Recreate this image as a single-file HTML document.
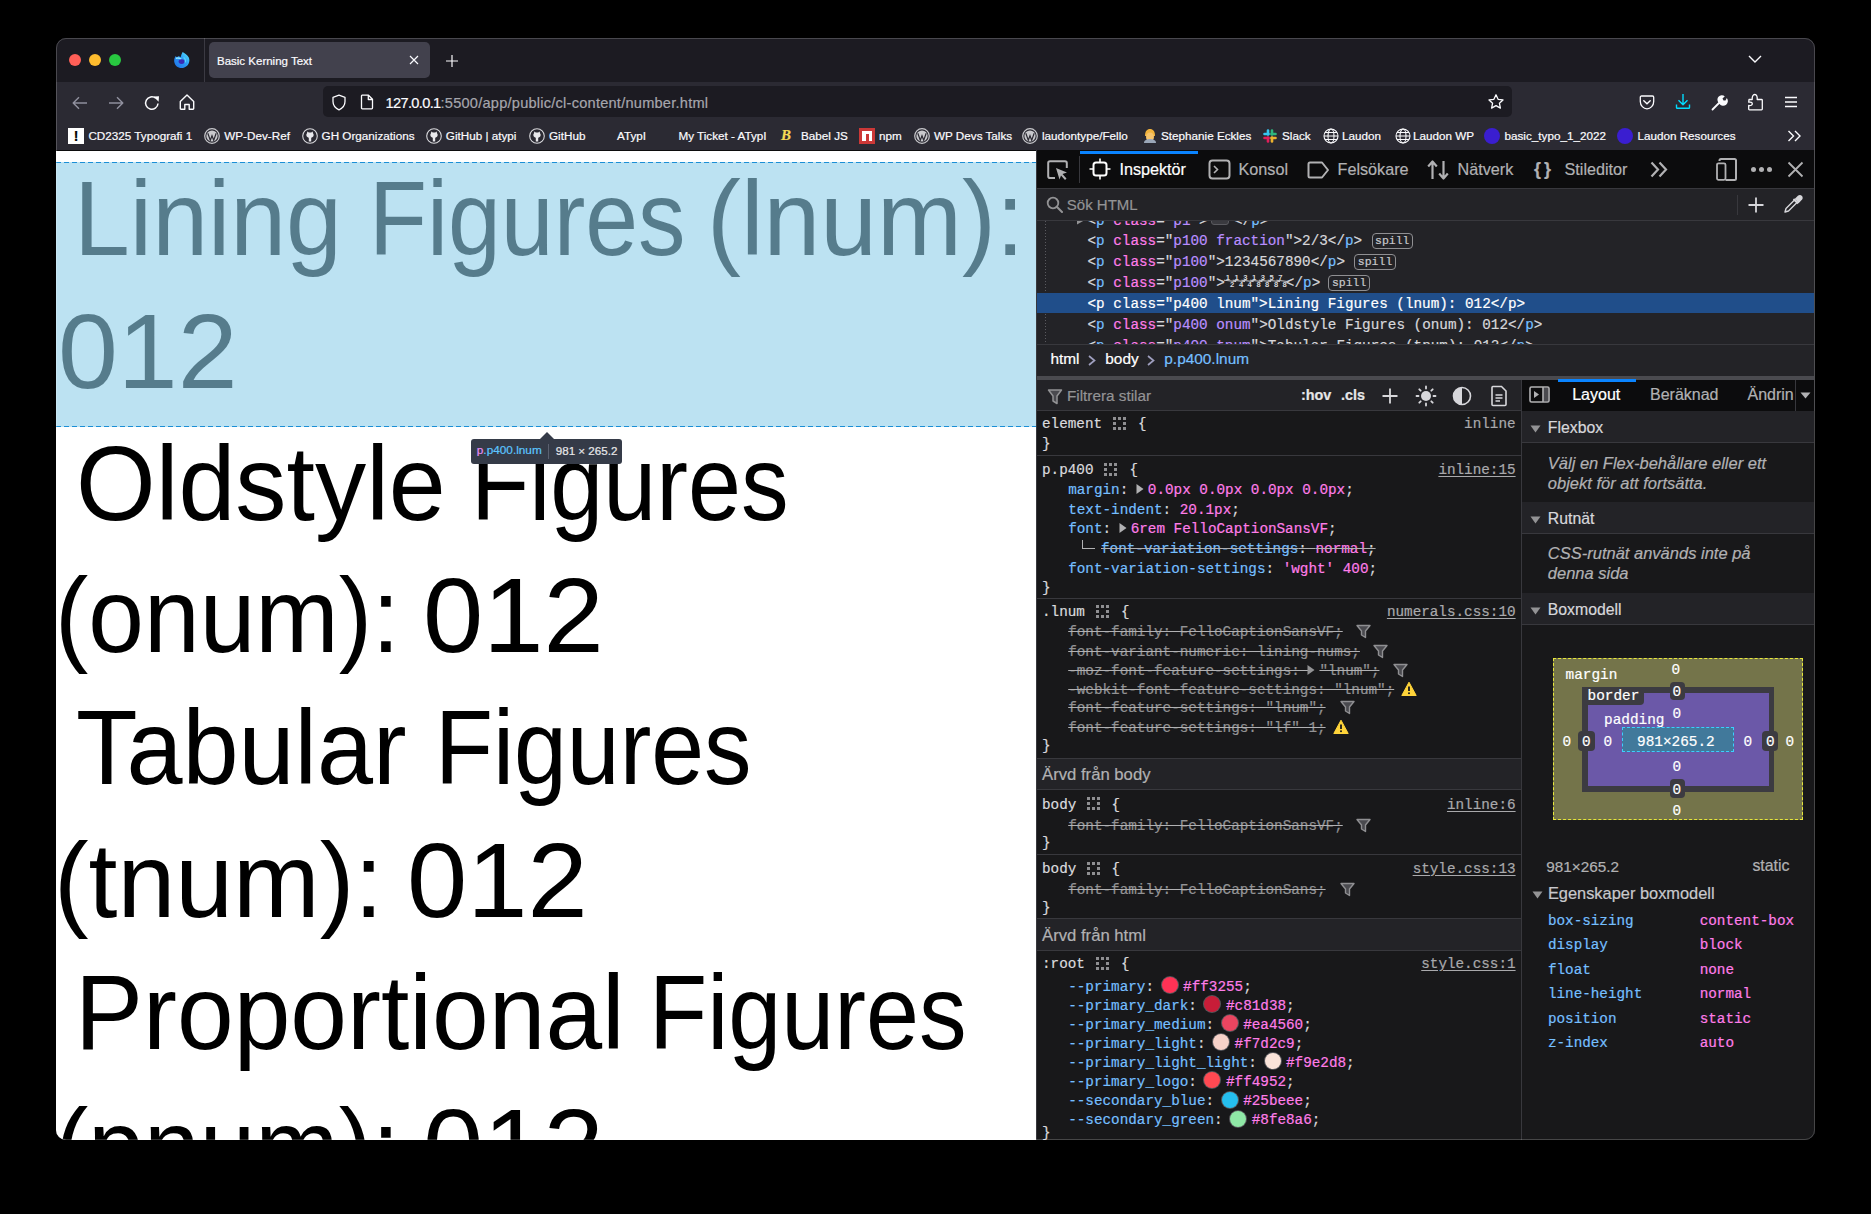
<!DOCTYPE html>
<html><head><meta charset="utf-8">
<style>
*{box-sizing:border-box;margin:0;padding:0}
html,body{width:1871px;height:1214px;background:#000;overflow:hidden;font-family:"Liberation Sans",sans-serif}
.a{position:absolute;white-space:nowrap}
#win{position:absolute;left:56px;top:38px;width:1759px;height:1102px;border-radius:10px;overflow:hidden;background:#1c1b22}
#w{position:absolute;left:-56px;top:-38px;width:1871px;height:1214px}
.big{position:absolute;white-space:nowrap;font-size:105px;line-height:105px;color:#000;transform-origin:0 0}
.bm{top:128px;font-size:11.7px;line-height:16px;color:#fbfbfe}
.mono{font-family:"Liberation Mono",monospace}
#w .a{-webkit-text-stroke:0.2px currentColor}
#w .big{-webkit-text-stroke:0}
</style></head><body>
<div id="win"><div id="w">
  <!-- tab bar -->
  <div class="a" style="left:56px;top:38px;width:1759px;height:44px;background:#1c1b22"></div>
  <!-- toolbar + bookmarks -->
  <div class="a" style="left:56px;top:82px;width:1759px;height:68px;background:#2b2a33"></div>

  <!-- CHROME -->
  <div class="a" style="left:69px;top:54px;width:12px;height:12px;border-radius:50%;background:#ff5f57"></div>
  <div class="a" style="left:89px;top:54px;width:12px;height:12px;border-radius:50%;background:#febc2e"></div>
  <div class="a" style="left:109px;top:54px;width:12px;height:12px;border-radius:50%;background:#28c840"></div>
  <svg class="a" style="left:173px;top:51px" width="18" height="18" viewBox="0 0 18 18">
    <defs><linearGradient id="ffg" x1="0" y1="1" x2="1" y2="0"><stop offset="0" stop-color="#1f6fe6"/><stop offset="0.55" stop-color="#2c9cf5"/><stop offset="1" stop-color="#5ef0ff"/></linearGradient></defs>
    <path d="M9.6 0.9C11.5 2.3 14.5 3.8 15.8 6.5C17.5 10.3 15.4 15.8 10 16.9C5.5 17.7 1.6 14.6 1.2 10.4C1 8.5 1.6 6.4 2.8 5C3.2 5.8 3.6 6.3 4.2 6.6C4.5 5.6 5.2 5.1 6 5.2C6.6 5.4 7 6 7.6 6.2C7.9 4.5 8.6 2.6 9.6 0.9Z" fill="url(#ffg)"/>
    <path d="M3.5 7.2C5 6.8 6.6 7.2 8 8" stroke="#8fe6ff" stroke-width="1.4" fill="none" stroke-linecap="round"/>
    <ellipse cx="8.6" cy="10.6" rx="3" ry="2.4" fill="#3a2bb5"/>
    <path d="M10.6 6.5C12.4 7.5 13 10 12 11.5" stroke="#55d6ff" stroke-width="1.2" fill="none"/>
  </svg>
  <div class="a" style="left:204px;top:38px;width:1px;height:44px;background:#3b3a43"></div>
  <div class="a" style="left:209px;top:42px;width:221px;height:36px;border-radius:5px;background:#42414d"></div>
  <div class="a" style="left:217px;top:53px;font-size:11.5px;line-height:16px;color:#fbfbfe">Basic Kerning Text</div>
  <svg class="a" style="left:408px;top:54px" width="12" height="12" viewBox="0 0 12 12"><path d="M2 2L10 10M10 2L2 10" stroke="#fbfbfe" stroke-width="1.15"/></svg>
  <svg class="a" style="left:444.5px;top:54px" width="14" height="14" viewBox="0 0 14 14"><path d="M7 1V13M1 7H13" stroke="#fbfbfe" stroke-width="1.2"/></svg>
  <svg class="a" style="left:1748px;top:55px" width="14" height="9" viewBox="0 0 14 9"><path d="M1 1L7 7L13 1" stroke="#fbfbfe" stroke-width="1.4" fill="none"/></svg>

  <!-- toolbar -->
  <svg class="a" style="left:71px;top:94px" width="18" height="18" viewBox="0 0 18 18"><path d="M16 9H2.5M8 3.2L2.2 9L8 14.8" stroke="#8f8f9d" stroke-width="1.4" fill="none" stroke-linejoin="round"/></svg>
  <svg class="a" style="left:107px;top:94px" width="18" height="18" viewBox="0 0 18 18"><path d="M2 9H15.5M10 3.2L15.8 9L10 14.8" stroke="#8f8f9d" stroke-width="1.4" fill="none" stroke-linejoin="round"/></svg>
  <svg class="a" style="left:143px;top:94px" width="18" height="18" viewBox="0 0 18 18"><path d="M15 9.5A6.2 6.2 0 1 1 12.8 4.3" stroke="#fbfbfe" stroke-width="1.5" fill="none"/><path d="M10.5 2.5L16 2.2L15.6 7.8Z" fill="#fbfbfe"/></svg>
  <svg class="a" style="left:178px;top:93px" width="18" height="18" viewBox="0 0 18 18"><path d="M2.3 8.5L9 2L15.7 8.5V15.5C15.7 16 15.4 16.2 15 16.2H11.2V11.5H6.8V16.2H3C2.6 16.2 2.3 16 2.3 15.5Z" stroke="#fbfbfe" stroke-width="1.4" fill="none" stroke-linejoin="round"/></svg>
  <div class="a" style="left:323px;top:86px;width:1189px;height:31px;border-radius:5px;background:#1c1b22"></div>
  <svg class="a" style="left:331px;top:94px" width="16" height="17" viewBox="0 0 16 17"><path d="M8 1.2L14 3.3V7.5C14 11.5 11.5 14.2 8 15.8C4.5 14.2 2 11.5 2 7.5V3.3Z" stroke="#fbfbfe" stroke-width="1.3" fill="none" stroke-linejoin="round"/></svg>
  <svg class="a" style="left:360px;top:94px" width="14" height="16" viewBox="0 0 14 16"><path d="M2 1.2H8.5L12.5 5.2V14C12.5 14.5 12.2 14.8 11.7 14.8H2.3C1.8 14.8 1.5 14.5 1.5 14V2C1.5 1.5 1.8 1.2 2.3 1.2ZM8.3 1.5V5.5H12.3" stroke="#fbfbfe" stroke-width="1.3" fill="none" stroke-linejoin="round"/></svg>
  <div class="a" style="left:385.5px;top:94px;font-size:14.6px;line-height:18px;color:#fbfbfe"><span style="letter-spacing:-0.65px">127.0.0.1</span><span style="color:#a6a6ad;letter-spacing:0.23px">:5500/app/public/cl-content/number.html</span></div>
  <svg class="a" style="left:1487px;top:93px" width="18" height="18" viewBox="0 0 18 18"><path d="M9 1.8L11.1 6.3L16 6.9L12.4 10.2L13.4 15.1L9 12.6L4.6 15.1L5.6 10.2L2 6.9L6.9 6.3Z" stroke="#fbfbfe" stroke-width="1.3" fill="none" stroke-linejoin="round"/></svg>
  <svg class="a" style="left:1639px;top:95px" width="16" height="15" viewBox="0 0 16 15"><path d="M2.5 1H13.5C14.2 1 14.7 1.5 14.7 2.2V6.5C14.7 10.5 11.6 13.8 8 13.8C4.4 13.8 1.3 10.5 1.3 6.5V2.2C1.3 1.5 1.8 1 2.5 1Z" stroke="#fbfbfe" stroke-width="1.3" fill="none"/><path d="M4.8 5.8L8 8.8L11.2 5.8" stroke="#fbfbfe" stroke-width="1.4" fill="none" stroke-linecap="round"/></svg>
  <svg class="a" style="left:1675px;top:93px" width="16" height="17" viewBox="0 0 16 17"><path d="M8 1V11.5M3.5 7.2L8 11.7L12.5 7.2M1.5 11.5V14.5C1.5 15 1.8 15.3 2.3 15.3H13.7C14.2 15.3 14.5 15 14.5 14.5V11.5" stroke="#0df" stroke-width="1.4" fill="none" stroke-linejoin="round"/></svg>
  <svg class="a" style="left:1711px;top:94px" width="17" height="17" viewBox="0 0 17 17"><path d="M1.5 15.5L8.5 8.5" stroke="#fbfbfe" stroke-width="1.8" stroke-linecap="round"/><path d="M8 9A4.2 4.2 0 0 1 13.8 2.2L11.5 4.5L12.5 6.5L14.5 6.5L15.8 4A4.2 4.2 0 0 1 8.5 10Z" fill="#fbfbfe"/></svg>
  <svg class="a" style="left:1747px;top:93px" width="17" height="18" viewBox="0 0 17 18"><path d="M2 6.5H5.2C5 4 5.8 1.5 7.8 1.5C9.8 1.5 10.4 4 10.2 6.5H14.5C15 6.5 15.3 6.8 15.3 7.3V16C15.3 16.5 15 16.8 14.5 16.8H2.5C2 16.8 1.7 16.5 1.7 16V12.5C4 12.8 5.3 12 5.3 10.8C5.3 9.6 4 8.8 1.7 9.2Z" stroke="#fbfbfe" stroke-width="1.3" fill="none" stroke-linejoin="round"/></svg>
  <svg class="a" style="left:1784px;top:96px" width="14" height="12" viewBox="0 0 14 12"><path d="M1 1.5H13M1 6H13M1 10.5H13" stroke="#fbfbfe" stroke-width="1.4"/></svg>


  <!-- bookmarks -->
  <div class="a" style="left:68px;top:128px;width:16px;height:16px;background:#fff;color:#000;font:bold 14px/16px 'Liberation Sans';text-align:center">!</div>
  <div class="a bm" style="left:88.4px">CD2325 Typografi 1</div>
  <svg class="a" style="left:204px;top:128px" width="16" height="16" viewBox="0 0 16 16"><circle cx="8" cy="8" r="7.3" fill="none" stroke="#c8c8cc" stroke-width="1.2"/><circle cx="8" cy="8" r="5.6" fill="#c8c8cc"/><path d="M3.8 5.2L6.3 12.3L8 7.8L9.7 12.3L12.2 5.2" stroke="#2b2a33" stroke-width="1.2" fill="none"/></svg>
  <div class="a bm" style="left:224.3px">WP-Dev-Ref</div>
  <svg class="a" style="left:302px;top:128px" width="16" height="16" viewBox="0 0 16 16"><circle cx="8" cy="8" r="7.3" fill="none" stroke="#d8d8dc" stroke-width="1.1"/><circle cx="8" cy="8" r="6" fill="#2b2a33"/><path d="M5 5.2L5.3 3.6L6.8 4.6H9.2L10.7 3.6L11 5.2C11.6 5.8 11.8 6.6 11.6 7.6C11.3 9 10 9.6 9.2 9.8V13.5H6.8V9.8C6 9.6 4.7 9 4.4 7.6C4.2 6.6 4.4 5.8 5 5.2Z" fill="#e8e8ec"/></svg>
  <div class="a bm" style="left:321.6px">GH Organizations</div>
  <svg class="a" style="left:426px;top:128px" width="16" height="16" viewBox="0 0 16 16"><circle cx="8" cy="8" r="7.3" fill="none" stroke="#d8d8dc" stroke-width="1.1"/><circle cx="8" cy="8" r="6" fill="#2b2a33"/><path d="M5 5.2L5.3 3.6L6.8 4.6H9.2L10.7 3.6L11 5.2C11.6 5.8 11.8 6.6 11.6 7.6C11.3 9 10 9.6 9.2 9.8V13.5H6.8V9.8C6 9.6 4.7 9 4.4 7.6C4.2 6.6 4.4 5.8 5 5.2Z" fill="#e8e8ec"/></svg>
  <div class="a bm" style="left:445.8px">GitHub | atypi</div>
  <svg class="a" style="left:529px;top:128px" width="16" height="16" viewBox="0 0 16 16"><circle cx="8" cy="8" r="7.3" fill="none" stroke="#d8d8dc" stroke-width="1.1"/><circle cx="8" cy="8" r="6" fill="#2b2a33"/><path d="M5 5.2L5.3 3.6L6.8 4.6H9.2L10.7 3.6L11 5.2C11.6 5.8 11.8 6.6 11.6 7.6C11.3 9 10 9.6 9.2 9.8V13.5H6.8V9.8C6 9.6 4.7 9 4.4 7.6C4.2 6.6 4.4 5.8 5 5.2Z" fill="#e8e8ec"/></svg>
  <div class="a bm" style="left:549px">GitHub</div>
  <div class="a bm" style="left:617px">ATypI</div>
  <div class="a bm" style="left:678.4px">My Ticket - ATypI</div>
  <div class="a" style="left:781px;top:127px;font:italic bold 15px/16px 'Liberation Serif';color:#f5da55">B</div>
  <div class="a bm" style="left:801px">Babel JS</div>
  <div class="a" style="left:859px;top:128px;width:16px;height:16px;background:#cb3837"><div class="a" style="left:3px;top:3px;width:10px;height:10px;background:#fff"></div><div class="a" style="left:6.5px;top:6px;width:3px;height:7px;background:#cb3837"></div></div>
  <div class="a bm" style="left:879px">npm</div>
  <svg class="a" style="left:914px;top:128px" width="16" height="16" viewBox="0 0 16 16"><circle cx="8" cy="8" r="7.3" fill="none" stroke="#c8c8cc" stroke-width="1.2"/><circle cx="8" cy="8" r="5.6" fill="#c8c8cc"/><path d="M3.8 5.2L6.3 12.3L8 7.8L9.7 12.3L12.2 5.2" stroke="#2b2a33" stroke-width="1.2" fill="none"/></svg>
  <div class="a bm" style="left:934px">WP Devs Talks</div>
  <svg class="a" style="left:1022px;top:128px" width="16" height="16" viewBox="0 0 16 16"><circle cx="8" cy="8" r="7.3" fill="none" stroke="#c8c8cc" stroke-width="1.2"/><circle cx="8" cy="8" r="5.6" fill="#c8c8cc"/><path d="M3.8 5.2L6.3 12.3L8 7.8L9.7 12.3L12.2 5.2" stroke="#2b2a33" stroke-width="1.2" fill="none"/></svg>
  <div class="a bm" style="left:1042px">laudontype/Fello</div>
  <svg class="a" style="left:1142px;top:127px" width="16" height="17" viewBox="0 0 16 17"><path d="M3 9C3 4 5 2 8 2C11 2 13 4 13 9Z" fill="#f2b33d"/><ellipse cx="8" cy="10" rx="4" ry="4.5" fill="#f7c46c"/><path d="M2 16C2 13 5 12 8 12C11 12 14 13 14 16Z" fill="#9aa6b8"/></svg>
  <div class="a bm" style="left:1161px">Stephanie Eckles</div>
  <svg class="a" style="left:1262px;top:128px" width="16" height="16" viewBox="0 0 16 16"><g stroke-width="2.6" stroke-linecap="round"><path d="M6 2.5V6.5" stroke="#36c5f0"/><path d="M2.5 6H6.5" stroke="#36c5f0"/><path d="M13.5 6H9.5" stroke="#2eb67d"/><path d="M10 2.5V6.5" stroke="#2eb67d"/><path d="M10 13.5V9.5" stroke="#ecb22e"/><path d="M13.5 10H9.5" stroke="#ecb22e"/><path d="M2.5 10H6.5" stroke="#e01e5a"/><path d="M6 13.5V9.5" stroke="#e01e5a"/></g></svg>
  <div class="a bm" style="left:1282px">Slack</div>
  <svg class="a" style="left:1323px;top:128px" width="16" height="16" viewBox="0 0 16 16"><g stroke="#fbfbfe" stroke-width="1.1" fill="none"><circle cx="8" cy="8" r="7"/><ellipse cx="8" cy="8" rx="3" ry="7"/><path d="M1 8H15M2 4.5H14M2 11.5H14"/></g></svg>
  <div class="a bm" style="left:1342px">Laudon</div>
  <svg class="a" style="left:1395px;top:128px" width="16" height="16" viewBox="0 0 16 16"><g stroke="#fbfbfe" stroke-width="1.1" fill="none"><circle cx="8" cy="8" r="7"/><ellipse cx="8" cy="8" rx="3" ry="7"/><path d="M1 8H15M2 4.5H14M2 11.5H14"/></g></svg>
  <div class="a bm" style="left:1413px">Laudon WP</div>
  <div class="a" style="left:1484px;top:128px;width:16px;height:16px;border-radius:50%;background:#3a1ed0"></div>
  <div class="a bm" style="left:1504.5px">basic_typo_1_2022</div>
  <div class="a" style="left:1617px;top:128px;width:16px;height:16px;border-radius:50%;background:#3a1ed0"></div>
  <div class="a bm" style="left:1637.4px">Laudon Resources</div>
  <svg class="a" style="left:1787px;top:130px" width="15" height="12" viewBox="0 0 15 12"><path d="M1.5 1L6.5 6L1.5 11M8 1L13 6L8 11" stroke="#fbfbfe" stroke-width="1.4" fill="none"/></svg>
  <!-- content -->
  <div class="a" style="left:56px;top:150px;width:980px;height:990px;background:#fff;border-top:1px solid #0c0c0d"></div>
  <div class="a" id="page" style="left:56px;top:151px;width:980px;height:989px;overflow:hidden"><div class="a" style="left:-56px;top:-151px;width:1871px;height:1214px">
<div class="big" style="left:73.6px;top:165.7px;transform:scaleX(0.956)">Lining</div>
<div class="big" style="left:368.5px;top:165.7px;transform:scaleX(0.904)">Figures</div>
<div class="big" style="left:706.6px;top:165.7px;transform:scaleX(0.971)">(lnum):</div>
<div class="big" style="left:57.7px;top:298.5px;transform:scaleX(1.025)">012</div>
<div class="big" style="left:76.2px;top:431px;transform:scaleX(0.975)">Oldstyle</div>
<div class="big" style="left:471.1px;top:431px;transform:scaleX(0.907)">Figures</div>
<div class="big" style="left:54.5px;top:563px;transform:scaleX(0.953)">(onum):</div>
<div class="big" style="left:422.8px;top:563px;transform:scaleX(1.031)">012</div>
<div class="big" style="left:76.1px;top:695px;transform:scaleX(0.96)">Tabular</div>
<div class="big" style="left:434.5px;top:695px;transform:scaleX(0.904)">Figures</div>
<div class="big" style="left:54.3px;top:828px;transform:scaleX(0.99)">(tnum):</div>
<div class="big" style="left:407.1px;top:828px;transform:scaleX(1.031)">012</div>
<div class="big" style="left:74.5px;top:960px;transform:scaleX(0.971)">Proportional</div>
<div class="big" style="left:649.2px;top:960px;transform:scaleX(0.907)">Figures</div>
<div class="big" style="left:54.5px;top:1093.5px;transform:scaleX(0.953)">(pnum):</div>
<div class="big" style="left:422.8px;top:1093.5px;transform:scaleX(1.031)">012</div>
  <div class="a" style="left:56px;top:162px;width:980px;height:265px;background:rgba(143,206,233,0.6)"></div>
  <div class="a" style="left:56px;top:162px;width:980px;height:1px;background:repeating-linear-gradient(90deg,#1b8fd6 0 5px,transparent 5px 8px)"></div>
  <div class="a" style="left:56px;top:426px;width:980px;height:1px;background:repeating-linear-gradient(90deg,#1b8fd6 0 5px,transparent 5px 8px)"></div>
  </div></div>
  <!-- devtools -->
  <!--DEV-->
<div class="a" style="left:1036px;top:150px;width:779px;height:990px;background:#232327;"></div>
<div class="a" style="left:1036px;top:150px;width:1px;height:990px;background:#38383d;"></div>
<div class="a" style="left:1037px;top:150px;width:777px;height:38px;background:#0c0c0d;"></div>
<div class="a" style="left:1037px;top:188px;width:777px;height:1px;background:#38383d;"></div>
<div class="a" style="left:1080px;top:151px;width:118px;height:3px;background:#0a84ff;"></div>
<svg class="a" style="left:1046px;top:159px" width="24" height="22" viewBox="0 0 24 22"><path d="M9 19H4C3 19 2.2 18.2 2.2 17.2V4C2.2 3 3 2.2 4 2.2H19C20 2.2 20.8 3 20.8 4V9" stroke="#b1b1b3" stroke-width="2" fill="none"/><path d="M10 9L21 13.5L16.5 15L20.5 19.5L19 21L15 16.5L13.5 20.5Z" fill="#b1b1b3"/></svg>
<div class="a" style="left:1079px;top:156px;width:1px;height:27px;background:#38383d;"></div>
<svg class="a" style="left:1089px;top:158px" width="22" height="22" viewBox="0 0 22 22"><rect x="4.5" y="4.5" width="13" height="13" rx="2.5" stroke="#fff" stroke-width="2" fill="none"/><path d="M11 0.5V4.5M11 17.5V21.5M0.5 11H4.5M17.5 11H21.5" stroke="#fff" stroke-width="1.6"/></svg>
<div class="a" style="left:1119.4px;top:157.9px;font-family:'Liberation Sans',sans-serif;font-size:16.2px;line-height:23px;color:#fff;">Inspektör</div>
<svg class="a" style="left:1208px;top:159px" width="23" height="21" viewBox="0 0 23 21"><rect x="1.5" y="1.5" width="20" height="18" rx="3" stroke="#b1b1b3" stroke-width="2" fill="none"/><path d="M6 7L9.5 10.5L6 14" stroke="#b1b1b3" stroke-width="1.6" fill="none"/></svg>
<div class="a" style="left:1238.5px;top:157.9px;font-family:'Liberation Sans',sans-serif;font-size:16.2px;line-height:23px;color:#b1b1b3;">Konsol</div>
<svg class="a" style="left:1307px;top:161px" width="23" height="18" viewBox="0 0 23 18"><path d="M3 1.5H15L21 9L15 16.5H3C2 16.5 1.5 16 1.5 15V3C1.5 2 2 1.5 3 1.5Z" stroke="#b1b1b3" stroke-width="2" fill="none" stroke-linejoin="round"/></svg>
<div class="a" style="left:1337.5px;top:157.9px;font-family:'Liberation Sans',sans-serif;font-size:16.2px;line-height:23px;color:#b1b1b3;">Felsökare</div>
<svg class="a" style="left:1427px;top:160px" width="23" height="20" viewBox="0 0 23 20"><path d="M5.5 19V2M1.2 6.5L5.5 1.5L9.8 6.5M16.5 1V18M12.2 13.5L16.5 18.5L20.8 13.5" stroke="#b1b1b3" stroke-width="2.2" fill="none" stroke-linejoin="round"/></svg>
<div class="a" style="left:1457.5px;top:157.9px;font-family:'Liberation Sans',sans-serif;font-size:16.2px;line-height:23px;color:#b1b1b3;">Nätverk</div>
<div class="a" style="left:1534.0px;top:157.3px;font-family:'Liberation Sans',sans-serif;font-size:18px;line-height:25px;color:#b1b1b3;font-weight:bold;letter-spacing:-1px">{ }</div>
<div class="a" style="left:1564.5px;top:157.9px;font-family:'Liberation Sans',sans-serif;font-size:16.2px;line-height:23px;color:#b1b1b3;">Stileditor</div>
<svg class="a" style="left:1650px;top:161px" width="19" height="17" viewBox="0 0 19 17"><path d="M1.5 1.5L8 8.5L1.5 15.5M9.5 1.5L16 8.5L9.5 15.5" stroke="#b1b1b3" stroke-width="2.2" fill="none"/></svg>
<svg class="a" style="left:1716px;top:158px" width="22" height="23" viewBox="0 0 22 23"><path d="M3.5 3V2.5C3.5 1.7 4.2 1 5 1H18.5C19.3 1 20 1.7 20 2.5V20.5C20 21.3 19.3 22 18.5 22H9.5" stroke="#b1b1b3" stroke-width="2" fill="none"/><rect x="1" y="5.3" width="8.5" height="16.5" rx="1.5" stroke="#b1b1b3" stroke-width="1.8" fill="none"/></svg>
<div class="a" style="left:1751.0px;top:167px;width:5px;height:5px;border-radius:50%;background:#b1b1b3"></div>
<div class="a" style="left:1759.0px;top:167px;width:5px;height:5px;border-radius:50%;background:#b1b1b3"></div>
<div class="a" style="left:1767.0px;top:167px;width:5px;height:5px;border-radius:50%;background:#b1b1b3"></div>
<svg class="a" style="left:1787px;top:161px" width="17" height="17" viewBox="0 0 17 17"><path d="M1.5 1.5L15.5 15.5M15.5 1.5L1.5 15.5" stroke="#b1b1b3" stroke-width="1.8"/></svg>
<div class="a" style="left:1037px;top:189px;width:777px;height:31px;background:#232327;"></div>
<div class="a" style="left:1037px;top:220px;width:777px;height:1px;background:#38383d;"></div>
<svg class="a" style="left:1046px;top:196px" width="18" height="17" viewBox="0 0 18 17"><circle cx="7" cy="7" r="5.3" stroke="#939395" stroke-width="1.8" fill="none"/><path d="M10.8 10.8L16 16" stroke="#939395" stroke-width="2" stroke-linecap="round"/></svg>
<div class="a" style="left:1066.8px;top:194.3px;font-family:'Liberation Sans',sans-serif;font-size:15px;line-height:21px;color:#939395;">Sök HTML</div>
<div class="a" style="left:1737px;top:195px;width:1px;height:20px;background:#38383d;"></div>
<svg class="a" style="left:1747px;top:196px" width="18" height="18" viewBox="0 0 18 18"><path d="M9 1.5V16.5M1.5 9H16.5" stroke="#d7d7db" stroke-width="1.8"/></svg>
<svg class="a" style="left:1783px;top:194px" width="20" height="20" viewBox="0 0 20 20"><path d="M2 18L3 14.5L11.5 6L14 8.5L5.5 17Z" stroke="#d7d7db" stroke-width="1.4" fill="none" stroke-linejoin="round"/><path d="M10.5 5L15 9.5M12.5 5.5L15.5 2.5C16.3 1.7 17.5 1.7 18.2 2.5C19 3.3 19 4.5 18.2 5.2L15 8.5" stroke="#d7d7db" stroke-width="1.8" fill="#d7d7db"/></svg>
<div class="a" style="left:1037px;top:221px;width:777px;height:123px;overflow:hidden"><div class="a" style="left:-1037px;top:-221px;width:1871px;height:1214px">
<div class="a" style="left:1045px;top:221px;width:1px;height:123px;background:repeating-linear-gradient(180deg,#5a5a5f 0 1px,transparent 1px 3px)"></div>
<div class="a" style="left:1037px;top:293px;width:777px;height:20px;background:#204e8a;"></div>
<svg class="a" style="left:1076px;top:216px" width="9" height="9" viewBox="0 0 9 9"><path d="M1 0.5L8 4.5L1 8.5Z" fill="#939395"/></svg>
<div class="a" style="left:1087.5px;top:210.7px;font-family:'Liberation Mono',monospace;font-size:14.3px;line-height:20px;color:#d7d7db;"><span style="color:#d7d7db">&lt;</span><span style="color:#75bfff">p</span> <span style="color:#ff7de9">class</span><span style="color:#d7d7db">="</span><span style="color:#b98eff">p1</span><span style="color:#d7d7db">"&gt;</span></div>
<div class="a" style="left:1211px;top:213px;width:18px;height:12px;background:#3a3a3f;border-radius:3px;border:1px solid #5a5a5f"></div>
<div class="a" style="left:1234.0px;top:210.7px;font-family:'Liberation Mono',monospace;font-size:14.3px;line-height:20px;color:#d7d7db;"><span style="color:#d7d7db">&lt;/</span><span style="color:#75bfff">p</span><span style="color:#d7d7db">&gt;</span></div>
<div class="a" style="left:1087.5px;top:230.7px;font-family:'Liberation Mono',monospace;font-size:14.3px;line-height:20px;color:#d7d7db;"><span style="color:#d7d7db">&lt;</span><span style="color:#75bfff">p</span> <span style="color:#ff7de9">class</span><span style="color:#d7d7db">="</span><span style="color:#b98eff">p100 fraction</span><span style="color:#d7d7db">"&gt;</span><span style="color:#d7d7db">2/3</span><span style="color:#d7d7db">&lt;/</span><span style="color:#75bfff">p</span><span style="color:#d7d7db">&gt;</span></div>
<div class="a" style="left:1087.5px;top:251.7px;font-family:'Liberation Mono',monospace;font-size:14.3px;line-height:20px;color:#d7d7db;"><span style="color:#d7d7db">&lt;</span><span style="color:#75bfff">p</span> <span style="color:#ff7de9">class</span><span style="color:#d7d7db">="</span><span style="color:#b98eff">p100</span><span style="color:#d7d7db">"&gt;</span><span style="color:#d7d7db">1234567890</span><span style="color:#d7d7db">&lt;/</span><span style="color:#75bfff">p</span><span style="color:#d7d7db">&gt;</span></div>
<div class="a" style="left:1087.5px;top:272.7px;font-family:'Liberation Mono',monospace;font-size:14.3px;line-height:20px;color:#d7d7db;"><span style="color:#d7d7db">&lt;</span><span style="color:#75bfff">p</span> <span style="color:#ff7de9">class</span><span style="color:#d7d7db">="</span><span style="color:#b98eff">p100</span><span style="color:#d7d7db">"&gt;</span><span style="display:inline-block;position:relative;width:61px;height:10px"><svg style="position:absolute;left:-7px;top:-7.5px;overflow:visible" width="70" height="18" viewBox="0 0 70 18"><text x="9.9" y="10.5" font-family="Liberation Sans" font-weight="bold" font-size="7.6" fill="#d7d7db" text-anchor="middle">1</text><text x="14.2" y="18" font-family="Liberation Sans" font-weight="bold" font-size="7.6" fill="#d7d7db" text-anchor="middle">2</text><path d="M5.9 11.2L18.2 12.6" stroke="#c8c8cc" stroke-width="1"/><text x="18.7" y="10.5" font-family="Liberation Sans" font-weight="bold" font-size="7.6" fill="#d7d7db" text-anchor="middle">1</text><text x="23.0" y="18" font-family="Liberation Sans" font-weight="bold" font-size="7.6" fill="#d7d7db" text-anchor="middle">4</text><path d="M14.7 11.2L27.0 12.6" stroke="#c8c8cc" stroke-width="1"/><text x="27.4" y="10.5" font-family="Liberation Sans" font-weight="bold" font-size="7.6" fill="#d7d7db" text-anchor="middle">3</text><text x="31.7" y="18" font-family="Liberation Sans" font-weight="bold" font-size="7.6" fill="#d7d7db" text-anchor="middle">4</text><path d="M23.4 11.2L35.7 12.6" stroke="#c8c8cc" stroke-width="1"/><text x="36.2" y="10.5" font-family="Liberation Sans" font-weight="bold" font-size="7.6" fill="#d7d7db" text-anchor="middle">1</text><text x="40.5" y="18" font-family="Liberation Sans" font-weight="bold" font-size="7.6" fill="#d7d7db" text-anchor="middle">8</text><path d="M32.2 11.2L44.5 12.6" stroke="#c8c8cc" stroke-width="1"/><text x="44.9" y="10.5" font-family="Liberation Sans" font-weight="bold" font-size="7.6" fill="#d7d7db" text-anchor="middle">3</text><text x="49.2" y="18" font-family="Liberation Sans" font-weight="bold" font-size="7.6" fill="#d7d7db" text-anchor="middle">8</text><path d="M40.9 11.2L53.2 12.6" stroke="#c8c8cc" stroke-width="1"/><text x="53.7" y="10.5" font-family="Liberation Sans" font-weight="bold" font-size="7.6" fill="#d7d7db" text-anchor="middle">5</text><text x="58.0" y="18" font-family="Liberation Sans" font-weight="bold" font-size="7.6" fill="#d7d7db" text-anchor="middle">8</text><path d="M49.7 11.2L62.0 12.6" stroke="#c8c8cc" stroke-width="1"/><text x="62.4" y="10.5" font-family="Liberation Sans" font-weight="bold" font-size="7.6" fill="#d7d7db" text-anchor="middle">7</text><text x="66.7" y="18" font-family="Liberation Sans" font-weight="bold" font-size="7.6" fill="#d7d7db" text-anchor="middle">8</text><path d="M58.4 11.2L70.7 12.6" stroke="#c8c8cc" stroke-width="1"/></svg></span><span style="color:#d7d7db">&lt;/</span><span style="color:#75bfff">p</span><span style="color:#d7d7db">&gt;</span></div>
<div class="a" style="left:1087.5px;top:293.7px;font-family:'Liberation Mono',monospace;font-size:14.3px;line-height:20px;color:#fff;">&lt;p class="p400 lnum"&gt;Lining Figures (lnum): 012&lt;/p&gt;</div>
<div class="a" style="left:1087.5px;top:314.7px;font-family:'Liberation Mono',monospace;font-size:14.3px;line-height:20px;color:#d7d7db;"><span style="color:#d7d7db">&lt;</span><span style="color:#75bfff">p</span> <span style="color:#ff7de9">class</span><span style="color:#d7d7db">="</span><span style="color:#b98eff">p400 onum</span><span style="color:#d7d7db">"&gt;</span><span style="color:#d7d7db">Oldstyle Figures (onum): 012</span><span style="color:#d7d7db">&lt;/</span><span style="color:#75bfff">p</span><span style="color:#d7d7db">&gt;</span></div>
<div class="a" style="left:1087.5px;top:335.7px;font-family:'Liberation Mono',monospace;font-size:14.3px;line-height:20px;color:#d7d7db;"><span style="color:#d7d7db">&lt;</span><span style="color:#75bfff">p</span> <span style="color:#ff7de9">class</span><span style="color:#d7d7db">="</span><span style="color:#b98eff">p400 tnum</span><span style="color:#d7d7db">"&gt;</span><span style="color:#d7d7db">Tabular Figures (tnum): 012</span><span style="color:#d7d7db">&lt;/</span><span style="color:#75bfff">p</span><span style="color:#d7d7db">&gt;</span></div>
<div class="a" style="left:1371.5px;top:233px;width:41.5px;height:15.5px;border:1px solid #8f8f92;border-radius:4px;font-family:'Liberation Mono',monospace;font-size:11.5px;line-height:13.5px;color:#c8c8cc;text-align:center">spill</div>
<div class="a" style="left:1354.3px;top:254px;width:41.5px;height:15.5px;border:1px solid #8f8f92;border-radius:4px;font-family:'Liberation Mono',monospace;font-size:11.5px;line-height:13.5px;color:#c8c8cc;text-align:center">spill</div>
<div class="a" style="left:1328.4px;top:275px;width:41.5px;height:15.5px;border:1px solid #8f8f92;border-radius:4px;font-family:'Liberation Mono',monospace;font-size:11.5px;line-height:13.5px;color:#c8c8cc;text-align:center">spill</div>
</div></div>
<div class="a" style="left:1037px;top:344px;width:777px;height:1px;background:#38383d;"></div>
<div class="a" style="left:1050.4px;top:348.1px;font-family:'Liberation Sans',sans-serif;font-size:15.4px;line-height:22px;color:#fff;">html</div>
<svg class="a" style="left:1088px;top:355px" width="8" height="11" viewBox="0 0 8 11"><path d="M1 1L6.5 5.5L1 10" stroke="#9f9fbf" stroke-width="1.7" fill="none"/></svg>
<div class="a" style="left:1105.3px;top:348.1px;font-family:'Liberation Sans',sans-serif;font-size:15.4px;line-height:22px;color:#fff;">body</div>
<svg class="a" style="left:1147px;top:355px" width="8" height="11" viewBox="0 0 8 11"><path d="M1 1L6.5 5.5L1 10" stroke="#9f9fbf" stroke-width="1.7" fill="none"/></svg>
<div class="a" style="left:1164.3px;top:348.1px;font-family:'Liberation Sans',sans-serif;font-size:15.4px;line-height:22px;color:#75bfff;">p.p400.lnum</div>
<div class="a" style="left:1037px;top:376px;width:777px;height:4px;background:#4a4a4f;"></div>
<div class="a" style="left:1037px;top:380px;width:484px;height:30px;background:#232327;"></div>
<div class="a" style="left:1037px;top:410px;width:484px;height:1px;background:#38383d;"></div>
<div class="a" style="left:1037px;top:411px;width:484px;height:729px;background:#18181a;"></div>
<div class="a" style="left:1521px;top:380px;width:1px;height:760px;background:#38383d;"></div>
<svg class="a" style="left:1047px;top:388px" width="16" height="17" viewBox="0 0 16 17"><path d="M1.5 2H14.5L10 8V15.5L6 13V8Z" stroke="#939395" stroke-width="1.5" fill="#4a4a4f" stroke-linejoin="round"/></svg>
<div class="a" style="left:1066.9px;top:384.6px;font-family:'Liberation Sans',sans-serif;font-size:15.3px;line-height:21px;color:#939395;">Filtrera stilar</div>
<div class="a" style="left:1301.0px;top:385.4px;font-family:'Liberation Sans',sans-serif;font-size:14.4px;line-height:20px;color:#e6e6e8;font-weight:bold">:hov</div>
<div class="a" style="left:1341.0px;top:385.4px;font-family:'Liberation Sans',sans-serif;font-size:14.4px;line-height:20px;color:#e6e6e8;font-weight:bold">.cls</div>
<svg class="a" style="left:1381px;top:387px" width="18" height="18" viewBox="0 0 18 18"><path d="M9 1.5V16.5M1.5 9H16.5" stroke="#d7d7db" stroke-width="1.8"/></svg>
<svg class="a" style="left:1415px;top:385px" width="22" height="22" viewBox="0 0 22 22"><circle cx="11" cy="11" r="5" fill="#d7d7db"/><g stroke="#d7d7db" stroke-width="1.8" stroke-linecap="round"><path d="M11 1.5V3.5M11 18.5V20.5M1.5 11H3.5M18.5 11H20.5M4.3 4.3L5.7 5.7M16.3 16.3L17.7 17.7M4.3 17.7L5.7 16.3M16.3 5.7L17.7 4.3"/></g></svg>
<svg class="a" style="left:1452px;top:386px" width="20" height="20" viewBox="0 0 20 20"><circle cx="10" cy="10" r="8.5" stroke="#d7d7db" stroke-width="1.6" fill="none"/><path d="M10 1.5A8.5 8.5 0 0 0 10 18.5Z" fill="#d7d7db"/></svg>
<svg class="a" style="left:1490px;top:385px" width="18" height="22" viewBox="0 0 18 22"><path d="M2.5 1.5H11.5L16 6V19.5C16 20.1 15.6 20.5 15 20.5H3C2.4 20.5 2 20.1 2 19.5V2.5C2 1.9 2.4 1.5 3 1.5Z" stroke="#d7d7db" stroke-width="1.6" fill="none"/><path d="M5.5 10H12.5M5.5 13H12.5M5.5 16H10" stroke="#d7d7db" stroke-width="1.4"/></svg>
<div class="a" style="left:1042.0px;top:414.4px;font-family:'Liberation Mono',monospace;font-size:14.3px;line-height:20px;color:#dadade;">element</div><svg class="a" style="left:1112.8px;top:417.2px" width="13" height="13" viewBox="0 0 13 13"><g fill="#8f8f92"><rect x="0" y="0" width="3" height="3"/><rect x="5" y="0" width="3" height="3"/><rect x="10" y="0" width="3" height="3"/><rect x="0" y="5" width="3" height="3"/><rect x="10" y="5" width="3" height="3"/><rect x="0" y="10" width="3" height="3"/><rect x="5" y="10" width="3" height="3"/><rect x="10" y="10" width="3" height="3"/></g></svg><div class="a" style="left:1138.0px;top:414.4px;font-family:'Liberation Mono',monospace;font-size:14.3px;line-height:20px;color:#dadade;">{</div><div class="a" style="left:1515.6px;top:414.4px;font-family:'Liberation Mono',monospace;font-size:14.3px;line-height:20px;color:#a9a9ac;transform:translateX(-100%);">inline</div>
<div class="a" style="left:1042.0px;top:434.0px;font-family:'Liberation Mono',monospace;font-size:14.3px;line-height:20px;color:#dadade;">}</div>
<div class="a" style="left:1037px;top:455px;width:484px;height:1px;background:#38383d;"></div>
<div class="a" style="left:1042.0px;top:460.2px;font-family:'Liberation Mono',monospace;font-size:14.3px;line-height:20px;color:#dadade;">p.p400</div><svg class="a" style="left:1104px;top:463px" width="13" height="13" viewBox="0 0 13 13"><g fill="#8f8f92"><rect x="0" y="0" width="3" height="3"/><rect x="5" y="0" width="3" height="3"/><rect x="10" y="0" width="3" height="3"/><rect x="0" y="5" width="3" height="3"/><rect x="10" y="5" width="3" height="3"/><rect x="0" y="10" width="3" height="3"/><rect x="5" y="10" width="3" height="3"/><rect x="10" y="10" width="3" height="3"/></g></svg><div class="a" style="left:1129.4px;top:460.2px;font-family:'Liberation Mono',monospace;font-size:14.3px;line-height:20px;color:#dadade;">{</div><div class="a" style="left:1515.6px;top:460.2px;font-family:'Liberation Mono',monospace;font-size:14.3px;line-height:20px;color:#a9a9ac;transform:translateX(-100%);text-decoration:underline;text-underline-offset:2px">inline:15</div>
<div class="a" style="left:1068.2px;top:480.0px;font-family:'Liberation Mono',monospace;font-size:14.3px;line-height:20px;color:#d7d7db;"><span style="color:#75bfff">margin</span><span style="color:#d7d7db">: </span><span style="display:inline-block;width:11px;position:relative;top:1px;left:-1px"><svg width="8" height="12" viewBox="0 0 8 12"><path d="M0.5 1L7.5 6L0.5 11Z" fill="#b1b1b3"/></svg></span><span style="color:#ff7de9">0.0px 0.0px 0.0px 0.0px</span><span style="color:#d7d7db">;</span></div>
<div class="a" style="left:1068.2px;top:499.6px;font-family:'Liberation Mono',monospace;font-size:14.3px;line-height:20px;color:#d7d7db;"><span style="color:#75bfff">text-indent</span><span style="color:#d7d7db">: </span><span style="color:#ff7de9">20.1px</span><span style="color:#d7d7db">;</span></div>
<div class="a" style="left:1068.2px;top:519.2px;font-family:'Liberation Mono',monospace;font-size:14.3px;line-height:20px;color:#d7d7db;"><span style="color:#75bfff">font</span><span style="color:#d7d7db">: </span><span style="display:inline-block;width:11px;position:relative;top:1px;left:-1px"><svg width="8" height="12" viewBox="0 0 8 12"><path d="M0.5 1L7.5 6L0.5 11Z" fill="#b1b1b3"/></svg></span><span style="color:#ff7de9">6rem FelloCaptionSansVF</span><span style="color:#d7d7db">;</span></div>
<div class="a" style="left:1082px;top:540px;width:13px;height:9px;border-left:1.5px solid #b1b1b3;border-bottom:1.5px solid #b1b1b3"></div>
<div class="a" style="left:1101.0px;top:538.8px;font-family:'Liberation Mono',monospace;font-size:14.3px;line-height:20px;color:#d7d7db;text-decoration:line-through;text-decoration-color:#b1b1b3"><span style="color:#75bfff">font-variation-settings</span><span style="color:#d7d7db">: </span><span style="color:#ff7de9">normal</span><span style="color:#d7d7db">;</span></div>
<div class="a" style="left:1068.2px;top:559.0px;font-family:'Liberation Mono',monospace;font-size:14.3px;line-height:20px;color:#d7d7db;"><span style="color:#75bfff">font-variation-settings</span><span style="color:#d7d7db">: </span><span style="color:#ff7de9">'wght' 400</span><span style="color:#d7d7db">;</span></div>
<div class="a" style="left:1042.0px;top:577.7px;font-family:'Liberation Mono',monospace;font-size:14.3px;line-height:20px;color:#dadade;">}</div>
<div class="a" style="left:1037px;top:598px;width:484px;height:1px;background:#38383d;"></div>
<div class="a" style="left:1042.0px;top:602.2px;font-family:'Liberation Mono',monospace;font-size:14.3px;line-height:20px;color:#dadade;">.lnum</div><svg class="a" style="left:1095.5px;top:605px" width="13" height="13" viewBox="0 0 13 13"><g fill="#8f8f92"><rect x="0" y="0" width="3" height="3"/><rect x="5" y="0" width="3" height="3"/><rect x="10" y="0" width="3" height="3"/><rect x="0" y="5" width="3" height="3"/><rect x="10" y="5" width="3" height="3"/><rect x="0" y="10" width="3" height="3"/><rect x="5" y="10" width="3" height="3"/><rect x="10" y="10" width="3" height="3"/></g></svg><div class="a" style="left:1121.0px;top:602.2px;font-family:'Liberation Mono',monospace;font-size:14.3px;line-height:20px;color:#dadade;">{</div><div class="a" style="left:1515.6px;top:602.2px;font-family:'Liberation Mono',monospace;font-size:14.3px;line-height:20px;color:#a9a9ac;transform:translateX(-100%);text-decoration:underline;text-underline-offset:2px">numerals.css:10</div>
<div class="a" style="left:1068.2px;top:622.3px;font-family:'Liberation Mono',monospace;font-size:14.3px;line-height:20px;color:#939395;text-decoration:line-through;text-decoration-color:#b1b1b3">font-family: FelloCaptionSansVF;</div><svg class="a" style="left:1356px;top:624.1px" width="15" height="15" viewBox="0 0 15 15"><path d="M1 1.5H14L9.5 7V13.5L5.5 11V7Z" stroke="#8f8f92" stroke-width="1.4" fill="#4a4a4f" stroke-linejoin="round"/></svg>
<div class="a" style="left:1068.2px;top:641.8px;font-family:'Liberation Mono',monospace;font-size:14.3px;line-height:20px;color:#939395;text-decoration:line-through;text-decoration-color:#b1b1b3">font-variant-numeric: lining-nums;</div><svg class="a" style="left:1373px;top:643.6px" width="15" height="15" viewBox="0 0 15 15"><path d="M1 1.5H14L9.5 7V13.5L5.5 11V7Z" stroke="#8f8f92" stroke-width="1.4" fill="#4a4a4f" stroke-linejoin="round"/></svg>
<div class="a" style="left:1068.2px;top:661.0px;font-family:'Liberation Mono',monospace;font-size:14.3px;line-height:20px;color:#939395;"><span style="text-decoration:line-through;text-decoration-color:#b1b1b3">-moz-font-feature-settings: </span><span style="display:inline-block;width:11px;position:relative;top:1px;left:-1px"><svg width="8" height="12" viewBox="0 0 8 12"><path d="M0.5 1L7.5 6L0.5 11Z" fill="#939395"/></svg></span><span style="text-decoration:line-through;text-decoration-color:#b1b1b3">"lnum";</span></div>
<div class="a" style="left:1068.2px;top:661.0px;font-family:'Liberation Mono',monospace;font-size:14.3px;line-height:20px;color:#939395;text-decoration:line-through;text-decoration-color:#b1b1b3"></div><svg class="a" style="left:1393px;top:662.8px" width="15" height="15" viewBox="0 0 15 15"><path d="M1 1.5H14L9.5 7V13.5L5.5 11V7Z" stroke="#8f8f92" stroke-width="1.4" fill="#4a4a4f" stroke-linejoin="round"/></svg>
<div class="a" style="left:1068.2px;top:679.7px;font-family:'Liberation Mono',monospace;font-size:14.3px;line-height:20px;color:#939395;text-decoration:line-through;text-decoration-color:#b1b1b3">-webkit-font-feature-settings: "lnum";</div><svg class="a" style="left:1401px;top:680.5px" width="16" height="16" viewBox="0 0 16 16"><path d="M8 1.2L15.2 14.5H0.8Z" fill="#ffd43a" stroke="#ffd43a" stroke-linejoin="round" stroke-width="1"/><path d="M8 5.5V10" stroke="#18181a" stroke-width="1.8"/><circle cx="8" cy="12.3" r="1" fill="#18181a"/></svg>
<div class="a" style="left:1068.2px;top:698.4px;font-family:'Liberation Mono',monospace;font-size:14.3px;line-height:20px;color:#939395;text-decoration:line-through;text-decoration-color:#b1b1b3">font-feature-settings: "lnum";</div><svg class="a" style="left:1340px;top:700.2px" width="15" height="15" viewBox="0 0 15 15"><path d="M1 1.5H14L9.5 7V13.5L5.5 11V7Z" stroke="#8f8f92" stroke-width="1.4" fill="#4a4a4f" stroke-linejoin="round"/></svg>
<div class="a" style="left:1068.2px;top:717.7px;font-family:'Liberation Mono',monospace;font-size:14.3px;line-height:20px;color:#939395;text-decoration:line-through;text-decoration-color:#b1b1b3">font-feature-settings: "lf" 1;</div><svg class="a" style="left:1333px;top:718.5px" width="16" height="16" viewBox="0 0 16 16"><path d="M8 1.2L15.2 14.5H0.8Z" fill="#ffd43a" stroke="#ffd43a" stroke-linejoin="round" stroke-width="1"/><path d="M8 5.5V10" stroke="#18181a" stroke-width="1.8"/><circle cx="8" cy="12.3" r="1" fill="#18181a"/></svg>
<div class="a" style="left:1042.0px;top:735.9px;font-family:'Liberation Mono',monospace;font-size:14.3px;line-height:20px;color:#dadade;">}</div>
<div class="a" style="left:1037px;top:758px;width:484px;height:32px;background:#232327;border-top:1px solid #38383d;border-bottom:1px solid #38383d"></div>
<div class="a" style="left:1042.0px;top:763.1px;font-family:'Liberation Sans',sans-serif;font-size:16.7px;line-height:23px;color:#b1b1b3;">Ärvd från body</div>
<div class="a" style="left:1042.0px;top:794.6px;font-family:'Liberation Mono',monospace;font-size:14.3px;line-height:20px;color:#dadade;">body</div><svg class="a" style="left:1086.7px;top:797.4px" width="13" height="13" viewBox="0 0 13 13"><g fill="#8f8f92"><rect x="0" y="0" width="3" height="3"/><rect x="5" y="0" width="3" height="3"/><rect x="10" y="0" width="3" height="3"/><rect x="0" y="5" width="3" height="3"/><rect x="10" y="5" width="3" height="3"/><rect x="0" y="10" width="3" height="3"/><rect x="5" y="10" width="3" height="3"/><rect x="10" y="10" width="3" height="3"/></g></svg><div class="a" style="left:1111.5px;top:794.6px;font-family:'Liberation Mono',monospace;font-size:14.3px;line-height:20px;color:#dadade;">{</div><div class="a" style="left:1515.6px;top:794.6px;font-family:'Liberation Mono',monospace;font-size:14.3px;line-height:20px;color:#a9a9ac;transform:translateX(-100%);text-decoration:underline;text-underline-offset:2px">inline:6</div>
<div class="a" style="left:1068.2px;top:816.4px;font-family:'Liberation Mono',monospace;font-size:14.3px;line-height:20px;color:#939395;text-decoration:line-through;text-decoration-color:#b1b1b3">font-family: FelloCaptionSansVF;</div><svg class="a" style="left:1356px;top:818.2px" width="15" height="15" viewBox="0 0 15 15"><path d="M1 1.5H14L9.5 7V13.5L5.5 11V7Z" stroke="#8f8f92" stroke-width="1.4" fill="#4a4a4f" stroke-linejoin="round"/></svg>
<div class="a" style="left:1042.0px;top:833.4px;font-family:'Liberation Mono',monospace;font-size:14.3px;line-height:20px;color:#dadade;">}</div>
<div class="a" style="left:1037px;top:854px;width:484px;height:1px;background:#38383d;"></div>
<div class="a" style="left:1042.0px;top:858.9px;font-family:'Liberation Mono',monospace;font-size:14.3px;line-height:20px;color:#dadade;">body</div><svg class="a" style="left:1086.7px;top:861.7px" width="13" height="13" viewBox="0 0 13 13"><g fill="#8f8f92"><rect x="0" y="0" width="3" height="3"/><rect x="5" y="0" width="3" height="3"/><rect x="10" y="0" width="3" height="3"/><rect x="0" y="5" width="3" height="3"/><rect x="10" y="5" width="3" height="3"/><rect x="0" y="10" width="3" height="3"/><rect x="5" y="10" width="3" height="3"/><rect x="10" y="10" width="3" height="3"/></g></svg><div class="a" style="left:1111.5px;top:858.9px;font-family:'Liberation Mono',monospace;font-size:14.3px;line-height:20px;color:#dadade;">{</div><div class="a" style="left:1515.6px;top:858.9px;font-family:'Liberation Mono',monospace;font-size:14.3px;line-height:20px;color:#a9a9ac;transform:translateX(-100%);text-decoration:underline;text-underline-offset:2px">style.css:13</div>
<div class="a" style="left:1068.2px;top:880.2px;font-family:'Liberation Mono',monospace;font-size:14.3px;line-height:20px;color:#939395;text-decoration:line-through;text-decoration-color:#b1b1b3">font-family: FelloCaptionSans;</div><svg class="a" style="left:1340px;top:882px" width="15" height="15" viewBox="0 0 15 15"><path d="M1 1.5H14L9.5 7V13.5L5.5 11V7Z" stroke="#8f8f92" stroke-width="1.4" fill="#4a4a4f" stroke-linejoin="round"/></svg>
<div class="a" style="left:1042.0px;top:897.7px;font-family:'Liberation Mono',monospace;font-size:14.3px;line-height:20px;color:#dadade;">}</div>
<div class="a" style="left:1037px;top:918px;width:484px;height:33px;background:#232327;border-top:1px solid #38383d;border-bottom:1px solid #38383d"></div>
<div class="a" style="left:1042.0px;top:923.6px;font-family:'Liberation Sans',sans-serif;font-size:16.7px;line-height:23px;color:#b1b1b3;">Ärvd från html</div>
<div class="a" style="left:1042.0px;top:953.8px;font-family:'Liberation Mono',monospace;font-size:14.3px;line-height:20px;color:#dadade;">:root</div><svg class="a" style="left:1095.5px;top:956.6px" width="13" height="13" viewBox="0 0 13 13"><g fill="#8f8f92"><rect x="0" y="0" width="3" height="3"/><rect x="5" y="0" width="3" height="3"/><rect x="10" y="0" width="3" height="3"/><rect x="0" y="5" width="3" height="3"/><rect x="10" y="5" width="3" height="3"/><rect x="0" y="10" width="3" height="3"/><rect x="5" y="10" width="3" height="3"/><rect x="10" y="10" width="3" height="3"/></g></svg><div class="a" style="left:1121.0px;top:953.8px;font-family:'Liberation Mono',monospace;font-size:14.3px;line-height:20px;color:#dadade;">{</div><div class="a" style="left:1515.6px;top:953.8px;font-family:'Liberation Mono',monospace;font-size:14.3px;line-height:20px;color:#a9a9ac;transform:translateX(-100%);text-decoration:underline;text-underline-offset:2px">style.css:1</div>
<div class="a" style="left:1068.2px;top:976.5px;font-family:'Liberation Mono',monospace;font-size:14.3px;line-height:20px;color:#d7d7db;"><span style="color:#75bfff">--primary</span><span style="color:#d7d7db">: </span><span style="display:inline-block;width:20.5px;height:12px;position:relative"><span style="position:absolute;left:-1px;top:-1.5px;width:16px;height:16px;border-radius:50%;background:#ff3255;box-shadow:0 0 0 1px #55555a"></span></span><span style="color:#ff7de9">#ff3255</span><span style="color:#d7d7db">;</span></div>
<div class="a" style="left:1068.2px;top:995.6px;font-family:'Liberation Mono',monospace;font-size:14.3px;line-height:20px;color:#d7d7db;"><span style="color:#75bfff">--primary_dark</span><span style="color:#d7d7db">: </span><span style="display:inline-block;width:20.5px;height:12px;position:relative"><span style="position:absolute;left:-1px;top:-1.5px;width:16px;height:16px;border-radius:50%;background:#c81d38;box-shadow:0 0 0 1px #55555a"></span></span><span style="color:#ff7de9">#c81d38</span><span style="color:#d7d7db">;</span></div>
<div class="a" style="left:1068.2px;top:1014.7px;font-family:'Liberation Mono',monospace;font-size:14.3px;line-height:20px;color:#d7d7db;"><span style="color:#75bfff">--primary_medium</span><span style="color:#d7d7db">: </span><span style="display:inline-block;width:20.5px;height:12px;position:relative"><span style="position:absolute;left:-1px;top:-1.5px;width:16px;height:16px;border-radius:50%;background:#ea4560;box-shadow:0 0 0 1px #55555a"></span></span><span style="color:#ff7de9">#ea4560</span><span style="color:#d7d7db">;</span></div>
<div class="a" style="left:1068.2px;top:1033.8px;font-family:'Liberation Mono',monospace;font-size:14.3px;line-height:20px;color:#d7d7db;"><span style="color:#75bfff">--primary_light</span><span style="color:#d7d7db">: </span><span style="display:inline-block;width:20.5px;height:12px;position:relative"><span style="position:absolute;left:-1px;top:-1.5px;width:16px;height:16px;border-radius:50%;background:#f7d2c9;box-shadow:0 0 0 1px #55555a"></span></span><span style="color:#ff7de9">#f7d2c9</span><span style="color:#d7d7db">;</span></div>
<div class="a" style="left:1068.2px;top:1052.9px;font-family:'Liberation Mono',monospace;font-size:14.3px;line-height:20px;color:#d7d7db;"><span style="color:#75bfff">--primary_light_light</span><span style="color:#d7d7db">: </span><span style="display:inline-block;width:20.5px;height:12px;position:relative"><span style="position:absolute;left:-1px;top:-1.5px;width:16px;height:16px;border-radius:50%;background:#f9e2d8;box-shadow:0 0 0 1px #55555a"></span></span><span style="color:#ff7de9">#f9e2d8</span><span style="color:#d7d7db">;</span></div>
<div class="a" style="left:1068.2px;top:1071.9px;font-family:'Liberation Mono',monospace;font-size:14.3px;line-height:20px;color:#d7d7db;"><span style="color:#75bfff">--primary_logo</span><span style="color:#d7d7db">: </span><span style="display:inline-block;width:20.5px;height:12px;position:relative"><span style="position:absolute;left:-1px;top:-1.5px;width:16px;height:16px;border-radius:50%;background:#ff4952;box-shadow:0 0 0 1px #55555a"></span></span><span style="color:#ff7de9">#ff4952</span><span style="color:#d7d7db">;</span></div>
<div class="a" style="left:1068.2px;top:1091.0px;font-family:'Liberation Mono',monospace;font-size:14.3px;line-height:20px;color:#d7d7db;"><span style="color:#75bfff">--secondary_blue</span><span style="color:#d7d7db">: </span><span style="display:inline-block;width:20.5px;height:12px;position:relative"><span style="position:absolute;left:-1px;top:-1.5px;width:16px;height:16px;border-radius:50%;background:#25beee;box-shadow:0 0 0 1px #55555a"></span></span><span style="color:#ff7de9">#25beee</span><span style="color:#d7d7db">;</span></div>
<div class="a" style="left:1068.2px;top:1110.1px;font-family:'Liberation Mono',monospace;font-size:14.3px;line-height:20px;color:#d7d7db;"><span style="color:#75bfff">--secondary_green</span><span style="color:#d7d7db">: </span><span style="display:inline-block;width:20.5px;height:12px;position:relative"><span style="position:absolute;left:-1px;top:-1.5px;width:16px;height:16px;border-radius:50%;background:#8fe8a6;box-shadow:0 0 0 1px #55555a"></span></span><span style="color:#ff7de9">#8fe8a6</span><span style="color:#d7d7db">;</span></div>
<div class="a" style="left:1042.0px;top:1123.2px;font-family:'Liberation Mono',monospace;font-size:14.3px;line-height:20px;color:#dadade;">}</div>
<div class="a" style="left:1522px;top:380px;width:292px;height:31px;background:#0c0c0d;"></div>
<div class="a" style="left:1522px;top:411px;width:293px;height:729px;background:#18181a;"></div>
<div class="a" style="left:1558px;top:379px;width:78px;height:3px;background:#0a84ff;"></div>
<svg class="a" style="left:1529px;top:386px" width="21" height="17" viewBox="0 0 21 17"><rect x="1" y="1" width="19" height="15" rx="1.5" stroke="#b1b1b3" stroke-width="1.6" fill="none"/><rect x="14" y="2" width="5" height="13" fill="#4a4a4f"/><path d="M14 1V16" stroke="#b1b1b3" stroke-width="1.6"/><path d="M5 5L10 8.5L5 12Z" fill="#b1b1b3"/></svg>
<div class="a" style="left:1572.2px;top:383.6px;font-family:'Liberation Sans',sans-serif;font-size:16.0px;line-height:22px;color:#fff;">Layout</div>
<div class="a" style="left:1650.0px;top:383.6px;font-family:'Liberation Sans',sans-serif;font-size:16.0px;line-height:22px;color:#b1b1b3;">Beräknad</div>
<div class="a" style="left:1747.5px;top:383.6px;font-family:'Liberation Sans',sans-serif;font-size:16.0px;line-height:22px;color:#b1b1b3;">Ändrin</div>
<div class="a" style="left:1795px;top:380px;width:1px;height:31px;background:#38383d;"></div>
<svg class="a" style="left:1800px;top:392px" width="11" height="7" viewBox="0 0 11 7"><path d="M0.5 0.5H10.5L5.5 6.5Z" fill="#b1b1b3"/></svg>
<div class="a" style="left:1522px;top:411px;width:292px;height:32px;background:#232327;border-bottom:1px solid #38383d"></div><svg class="a" style="left:1530px;top:424.5px" width="11" height="8" viewBox="0 0 11 8"><path d="M0.5 0.5H10.5L5.5 7.5Z" fill="#939395"/></svg><div class="a" style="left:1547.8px;top:416.5px;font-family:'Liberation Sans',sans-serif;font-size:15.8px;line-height:22px;color:#d7d7db;">Flexbox</div>
<div class="a" style="left:1547.8px;top:452.1px;font-family:'Liberation Sans',sans-serif;font-size:16.5px;line-height:23px;color:#b1b1b3;font-style:italic">Välj en Flex-behållare eller ett</div>
<div class="a" style="left:1547.8px;top:471.6px;font-family:'Liberation Sans',sans-serif;font-size:16.5px;line-height:23px;color:#b1b1b3;font-style:italic">objekt för att fortsätta.</div>
<div class="a" style="left:1522px;top:502px;width:292px;height:1px;background:#38383d;"></div>
<div class="a" style="left:1522px;top:502px;width:292px;height:32px;background:#232327;border-bottom:1px solid #38383d"></div><svg class="a" style="left:1530px;top:515.5px" width="11" height="8" viewBox="0 0 11 8"><path d="M0.5 0.5H10.5L5.5 7.5Z" fill="#939395"/></svg><div class="a" style="left:1547.8px;top:507.5px;font-family:'Liberation Sans',sans-serif;font-size:15.8px;line-height:22px;color:#d7d7db;">Rutnät</div>
<div class="a" style="left:1547.8px;top:542.3px;font-family:'Liberation Sans',sans-serif;font-size:16.5px;line-height:23px;color:#b1b1b3;font-style:italic">CSS-rutnät används inte på</div>
<div class="a" style="left:1547.8px;top:562.0px;font-family:'Liberation Sans',sans-serif;font-size:16.5px;line-height:23px;color:#b1b1b3;font-style:italic">denna sida</div>
<div class="a" style="left:1522px;top:593px;width:292px;height:1px;background:#38383d;"></div>
<div class="a" style="left:1522px;top:593px;width:292px;height:32px;background:#232327;border-bottom:1px solid #38383d"></div><svg class="a" style="left:1530px;top:606.5px" width="11" height="8" viewBox="0 0 11 8"><path d="M0.5 0.5H10.5L5.5 7.5Z" fill="#939395"/></svg><div class="a" style="left:1547.8px;top:598.5px;font-family:'Liberation Sans',sans-serif;font-size:15.8px;line-height:22px;color:#d7d7db;">Boxmodell</div>
<div class="a" style="left:1553px;top:658px;width:250px;height:162px;background:#74744a;border:1px dashed #e8e83a"></div>
<div class="a" style="left:1565.5px;top:664.6px;font-family:'Liberation Mono',monospace;font-size:14.4px;line-height:20px;color:#fff;">margin</div>
<div class="a" style="left:1671.5px;top:659.9px;font-family:'Liberation Mono',monospace;font-size:14.4px;line-height:20px;color:#fff;">0</div>
<div class="a" style="left:1582px;top:687px;width:192px;height:105px;background:#3c3b41;"></div>
<div class="a" style="left:1587.5px;top:693px;width:181px;height:93px;background:#6b58a8;"></div>
<div class="a" style="left:1582px;top:687px;width:62px;height:18px;background:#3c3b41;border-bottom-right-radius:4px"></div>
<div class="a" style="left:1587.5px;top:686.2px;font-family:'Liberation Mono',monospace;font-size:14.4px;line-height:20px;color:#fff;">border</div>
<div class="a" style="left:1669.5px;top:681.5px;width:15.5px;height:18.5px;background:#3c3b41;border-radius:4px"></div>
<div class="a" style="left:1672.5px;top:682.2px;font-family:'Liberation Mono',monospace;font-size:14.4px;line-height:20px;color:#fff;">0</div>
<div class="a" style="left:1604.0px;top:709.9px;font-family:'Liberation Mono',monospace;font-size:14.4px;line-height:20px;color:#fff;">padding</div>
<div class="a" style="left:1672.5px;top:703.7px;font-family:'Liberation Mono',monospace;font-size:14.4px;line-height:20px;color:#fff;">0</div>
<div class="a" style="left:1622px;top:727px;width:112px;height:25px;background:#41799b;border:1px dashed #3ccfff"></div>
<div class="a" style="left:1637.0px;top:731.9px;font-family:'Liberation Mono',monospace;font-size:14.4px;line-height:20px;color:#fff;">981×265.2</div>
<div class="a" style="left:1562.4px;top:731.9px;font-family:'Liberation Mono',monospace;font-size:14.4px;line-height:20px;color:#fff;">0</div>
<div class="a" style="left:1578px;top:731px;width:16.5px;height:19.5px;background:#3c3b41;border-radius:4px"></div>
<div class="a" style="left:1582.0px;top:731.9px;font-family:'Liberation Mono',monospace;font-size:14.4px;line-height:20px;color:#fff;">0</div>
<div class="a" style="left:1603.5px;top:731.9px;font-family:'Liberation Mono',monospace;font-size:14.4px;line-height:20px;color:#fff;">0</div>
<div class="a" style="left:1743.6px;top:731.9px;font-family:'Liberation Mono',monospace;font-size:14.4px;line-height:20px;color:#fff;">0</div>
<div class="a" style="left:1762px;top:731px;width:16px;height:19.5px;background:#3c3b41;border-radius:4px"></div>
<div class="a" style="left:1766.0px;top:731.9px;font-family:'Liberation Mono',monospace;font-size:14.4px;line-height:20px;color:#fff;">0</div>
<div class="a" style="left:1785.4px;top:731.9px;font-family:'Liberation Mono',monospace;font-size:14.4px;line-height:20px;color:#fff;">0</div>
<div class="a" style="left:1672.5px;top:756.6px;font-family:'Liberation Mono',monospace;font-size:14.4px;line-height:20px;color:#fff;">0</div>
<div class="a" style="left:1669.5px;top:779.3px;width:15.5px;height:18.5px;background:#3c3b41;border-radius:4px"></div>
<div class="a" style="left:1672.5px;top:779.7px;font-family:'Liberation Mono',monospace;font-size:14.4px;line-height:20px;color:#fff;">0</div>
<div class="a" style="left:1672.5px;top:800.5px;font-family:'Liberation Mono',monospace;font-size:14.4px;line-height:20px;color:#fff;">0</div>
<div class="a" style="left:1546.3px;top:855.5px;font-family:'Liberation Sans',sans-serif;font-size:15.3px;line-height:21px;color:#b1b1b3;">981×265.2</div>
<div class="a" style="left:1752.4px;top:854.8px;font-family:'Liberation Sans',sans-serif;font-size:15.9px;line-height:22px;color:#b1b1b3;">static</div>
<svg class="a" style="left:1532px;top:891px" width="11" height="8" viewBox="0 0 11 8"><path d="M0.5 0.5H10.5L5.5 7.5Z" fill="#939395"/></svg>
<div class="a" style="left:1547.9px;top:882.3px;font-family:'Liberation Sans',sans-serif;font-size:16.4px;line-height:23px;color:#c8c8cc;">Egenskaper boxmodell</div>
<div class="a" style="left:1547.9px;top:910.6px;font-family:'Liberation Mono',monospace;font-size:14.3px;line-height:20px;color:#75bfff;">box-sizing</div>
<div class="a" style="left:1699.7px;top:910.6px;font-family:'Liberation Mono',monospace;font-size:14.3px;line-height:20px;color:#ff7de9;">content-box</div>
<div class="a" style="left:1547.9px;top:935.1px;font-family:'Liberation Mono',monospace;font-size:14.3px;line-height:20px;color:#75bfff;">display</div>
<div class="a" style="left:1699.7px;top:935.1px;font-family:'Liberation Mono',monospace;font-size:14.3px;line-height:20px;color:#ff7de9;">block</div>
<div class="a" style="left:1547.9px;top:959.6px;font-family:'Liberation Mono',monospace;font-size:14.3px;line-height:20px;color:#75bfff;">float</div>
<div class="a" style="left:1699.7px;top:959.6px;font-family:'Liberation Mono',monospace;font-size:14.3px;line-height:20px;color:#ff7de9;">none</div>
<div class="a" style="left:1547.9px;top:984.0px;font-family:'Liberation Mono',monospace;font-size:14.3px;line-height:20px;color:#75bfff;">line-height</div>
<div class="a" style="left:1699.7px;top:984.0px;font-family:'Liberation Mono',monospace;font-size:14.3px;line-height:20px;color:#ff7de9;">normal</div>
<div class="a" style="left:1547.9px;top:1008.5px;font-family:'Liberation Mono',monospace;font-size:14.3px;line-height:20px;color:#75bfff;">position</div>
<div class="a" style="left:1699.7px;top:1008.5px;font-family:'Liberation Mono',monospace;font-size:14.3px;line-height:20px;color:#ff7de9;">static</div>
<div class="a" style="left:1547.9px;top:1033.0px;font-family:'Liberation Mono',monospace;font-size:14.3px;line-height:20px;color:#75bfff;">z-index</div>
<div class="a" style="left:1699.7px;top:1033.0px;font-family:'Liberation Mono',monospace;font-size:14.3px;line-height:20px;color:#ff7de9;">auto</div>
<svg class="a" style="left:538px;top:431px" width="18" height="9" viewBox="0 0 18 9"><path d="M1 9L9 1L17 9Z" fill="#353b48"/></svg>
<div class="a" style="left:471px;top:439px;width:151px;height:25px;background:#353b48;border-radius:3px"></div>
<div class="a" style="left:476.8px;top:442.4px;font-family:'Liberation Sans',sans-serif;font-size:11.8px;line-height:17px;color:#5cc5ff;"><span style="color:#e78cf2">p</span>.p400.lnum</div>
<div class="a" style="left:548px;top:444px;width:1px;height:15px;background:#5b6170;"></div>
<div class="a" style="left:555.8px;top:443.0px;font-family:'Liberation Sans',sans-serif;font-size:11.6px;line-height:16px;color:#e8e8ea;">981 × 265.2</div>
<!--/DEV-->
</div></div>
<div class="a" style="left:56px;top:38px;width:1759px;height:1102px;border-radius:10px;border:1px solid rgba(255,255,255,0.2);pointer-events:none"></div>
</body></html>
